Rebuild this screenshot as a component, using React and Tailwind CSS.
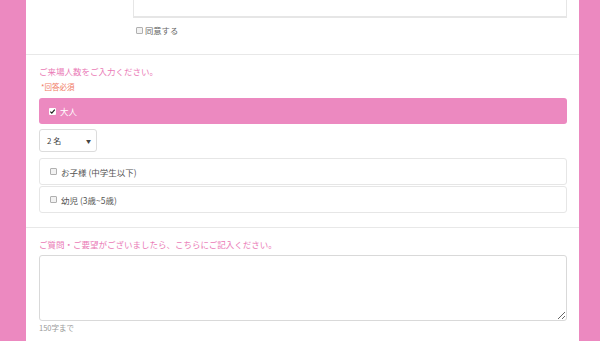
import React from "react";

const font = { fontFamily: '"Noto Sans CJK JP", "Noto Sans", sans-serif' };

function Box({ checked }) {
  return (
    <span className="flex h-[7px] w-[7px] shrink-0 items-center justify-center rounded-[1px] border border-[#b0b0b0] bg-[#f2f2f2]">
      {checked && (
        <svg viewBox="0 0 8 8" className="h-[7px] w-[7px]">
          <path d="M1.5 4.2 L3.2 5.9 L6.6 1.8" fill="none" stroke="#222" strokeWidth="1.4" />
        </svg>
      )}
    </span>
  );
}

function Option({ label }) {
  return (
    <div className="flex h-[27px] items-center gap-[4px] rounded-[3px] border border-[#e6e6e6] pl-[10px] text-[8.5px] text-[#555]">
      <Box />
      <span>{label}</span>
    </div>
  );
}

export default function App() {
  return (
    <div className="h-[341px] w-[600px] overflow-hidden bg-[#ec89c0]" style={font}>
      <div className="mx-[26px] flex h-full w-[553px] flex-col bg-white">
        <div className="flex flex-col pl-[107px] pr-[12px]">
          <div className="h-[18px] border-x border-b-2 border-[#e6e6e6] bg-white" />
          <div className="mt-[6px] flex items-center gap-[2px] pl-[3px] text-[8.3px] text-[#666]">
            <Box />
            <span>同意する</span>
          </div>
        </div>

        <div className="mt-[18px] border-t border-[#e8e8e8] px-[13px] pr-[12px]">
          <div className="mt-[10px] text-[8.5px] leading-[12px] text-[#ea7ab6]">ご来場人数をご入力ください。</div>
          <div className="mt-[5px] pl-[2px] text-[7.5px] leading-[10px] text-[#f07a63]">*回答必須</div>
          <div className="mt-[6px] flex h-[26px] items-center gap-[4px] rounded-[3px] bg-[#ec89c0] pl-[10px] text-[8.5px] text-white">
            <span className="flex h-[7px] w-[7px] items-center justify-center rounded-[1px] bg-white">
              <svg viewBox="0 0 8 8" className="h-[7px] w-[7px]">
                <path d="M1.5 4.2 L3.2 5.9 L6.6 1.8" fill="none" stroke="#222" strokeWidth="1.4" />
              </svg>
            </span>
            <span>大人</span>
          </div>
          <div className="mt-[5px] flex h-[23px] w-[58px] items-center justify-between rounded-[3px] border border-[#dcdcdc] pl-[7px] pr-[5px] text-[8px] text-[#444]">
            <span>2 名</span>
            <span className="text-[5px]">▼</span>
          </div>
          <div className="mt-[6px] flex flex-col gap-[1px]">
            <Option label="お子様 (中学生以下)" />
            <Option label="幼児 (3歳~5歳)" />
          </div>
        </div>

        <div className="mt-[14px] border-t border-[#e8e8e8] px-[13px] pr-[12px]">
          <div className="mt-[10px] text-[8.5px] leading-[12px] text-[#ea7ab6]">
            ご質問・ご要望がございましたら、こちらにご記入ください。
          </div>
          <textarea className="mt-[5px] block h-[66px] w-full resize-y rounded-[3px] border border-[#d9d9d9] bg-white outline-none" />
          <div className="mt-[2px] text-[7.5px] leading-[10px] text-[#999]">150字まで</div>
        </div>
      </div>
    </div>
  );
}
